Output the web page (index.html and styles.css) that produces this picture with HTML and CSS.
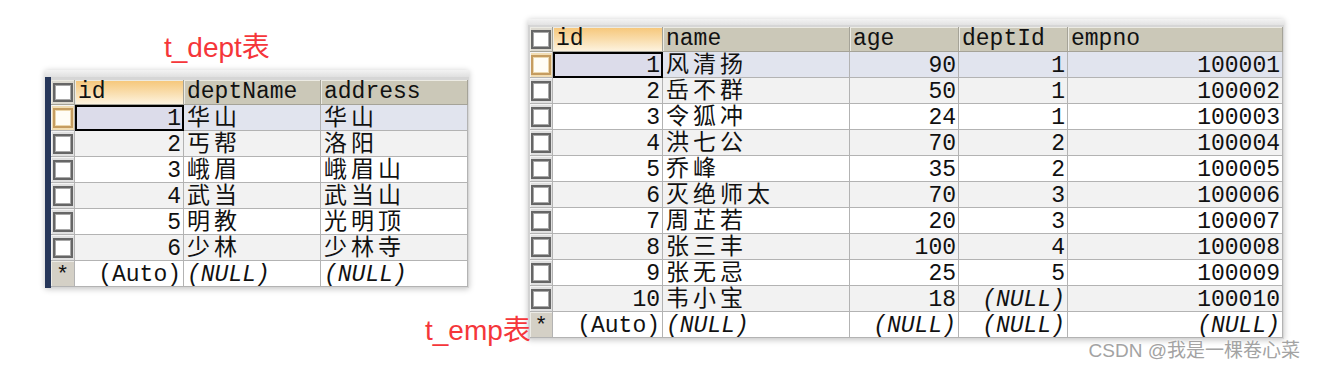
FILE: index.html
```html
<!DOCTYPE html>
<html lang="zh-CN">
<head>
<meta charset="utf-8">
<title>t_dept / t_emp</title>
<link rel="stylesheet" href="styles.css">
</head>
<body>
<div class="page">
  <div class="col col-dept">
    <div class="label">t_dept表</div>
    <div class="win win-dept">
      <div class="navy"></div>
      <div class="frame">
        <div class="grid grid-dept">
          <div class="row head">
            <div class="cell chk"><span class="box"></span></div>
            <div class="cell active">id</div>
            <div class="cell">deptName</div>
            <div class="cell">address</div>
          </div>
          <div class="row sel">
            <div class="cell chk"><span class="box"></span></div>
            <div class="cell num cur">1</div>
            <div class="cell zh">华山</div>
            <div class="cell zh">华山</div>
          </div>
          <div class="row alt">
            <div class="cell chk"><span class="box"></span></div>
            <div class="cell num">2</div>
            <div class="cell zh">丐帮</div>
            <div class="cell zh">洛阳</div>
          </div>
          <div class="row">
            <div class="cell chk"><span class="box"></span></div>
            <div class="cell num">3</div>
            <div class="cell zh">峨眉</div>
            <div class="cell zh">峨眉山</div>
          </div>
          <div class="row alt">
            <div class="cell chk"><span class="box"></span></div>
            <div class="cell num">4</div>
            <div class="cell zh">武当</div>
            <div class="cell zh">武当山</div>
          </div>
          <div class="row">
            <div class="cell chk"><span class="box"></span></div>
            <div class="cell num">5</div>
            <div class="cell zh">明教</div>
            <div class="cell zh">光明顶</div>
          </div>
          <div class="row alt">
            <div class="cell chk"><span class="box"></span></div>
            <div class="cell num">6</div>
            <div class="cell zh">少林</div>
            <div class="cell zh">少林寺</div>
          </div>
          <div class="row">
            <div class="cell chk star">*</div>
            <div class="cell num">(Auto)</div>
            <div class="cell null">(NULL)</div>
            <div class="cell null">(NULL)</div>
          </div>
        </div>
      </div>
    </div>
  </div>

  <div class="col col-emp">
    <div class="win win-emp">
      <div class="frame">
        <div class="grid grid-emp">
          <div class="row head">
            <div class="cell chk"><span class="box"></span></div>
            <div class="cell active">id</div>
            <div class="cell">name</div>
            <div class="cell">age</div>
            <div class="cell">deptId</div>
            <div class="cell">empno</div>
          </div>
          <div class="row sel">
            <div class="cell chk"><span class="box"></span></div>
            <div class="cell num cur">1</div>
            <div class="cell zh">风清扬</div>
            <div class="cell num">90</div>
            <div class="cell num">1</div>
            <div class="cell num">100001</div>
          </div>
          <div class="row alt">
            <div class="cell chk"><span class="box"></span></div>
            <div class="cell num">2</div>
            <div class="cell zh">岳不群</div>
            <div class="cell num">50</div>
            <div class="cell num">1</div>
            <div class="cell num">100002</div>
          </div>
          <div class="row">
            <div class="cell chk"><span class="box"></span></div>
            <div class="cell num">3</div>
            <div class="cell zh">令狐冲</div>
            <div class="cell num">24</div>
            <div class="cell num">1</div>
            <div class="cell num">100003</div>
          </div>
          <div class="row alt">
            <div class="cell chk"><span class="box"></span></div>
            <div class="cell num">4</div>
            <div class="cell zh">洪七公</div>
            <div class="cell num">70</div>
            <div class="cell num">2</div>
            <div class="cell num">100004</div>
          </div>
          <div class="row">
            <div class="cell chk"><span class="box"></span></div>
            <div class="cell num">5</div>
            <div class="cell zh">乔峰</div>
            <div class="cell num">35</div>
            <div class="cell num">2</div>
            <div class="cell num">100005</div>
          </div>
          <div class="row alt">
            <div class="cell chk"><span class="box"></span></div>
            <div class="cell num">6</div>
            <div class="cell zh">灭绝师太</div>
            <div class="cell num">70</div>
            <div class="cell num">3</div>
            <div class="cell num">100006</div>
          </div>
          <div class="row">
            <div class="cell chk"><span class="box"></span></div>
            <div class="cell num">7</div>
            <div class="cell zh">周芷若</div>
            <div class="cell num">20</div>
            <div class="cell num">3</div>
            <div class="cell num">100007</div>
          </div>
          <div class="row alt">
            <div class="cell chk"><span class="box"></span></div>
            <div class="cell num">8</div>
            <div class="cell zh">张三丰</div>
            <div class="cell num">100</div>
            <div class="cell num">4</div>
            <div class="cell num">100008</div>
          </div>
          <div class="row">
            <div class="cell chk"><span class="box"></span></div>
            <div class="cell num">9</div>
            <div class="cell zh">张无忌</div>
            <div class="cell num">25</div>
            <div class="cell num">5</div>
            <div class="cell num">100009</div>
          </div>
          <div class="row alt">
            <div class="cell chk"><span class="box"></span></div>
            <div class="cell num">10</div>
            <div class="cell zh">韦小宝</div>
            <div class="cell num">18</div>
            <div class="cell num null">(NULL)</div>
            <div class="cell num">100010</div>
          </div>
          <div class="row">
            <div class="cell chk star">*</div>
            <div class="cell num">(Auto)</div>
            <div class="cell null">(NULL)</div>
            <div class="cell num null">(NULL)</div>
            <div class="cell num null">(NULL)</div>
            <div class="cell num null">(NULL)</div>
          </div>
        </div>
      </div>
    </div>
    <div class="label label-emp">t_emp表</div>
  </div>

  <div class="watermark">CSDN @我是一棵卷心菜</div>
</div>
</body>
</html>
```

FILE: styles.css
```css
* { box-sizing: border-box; }

html, body {
  margin: 0;
  padding: 0;
  background: #ffffff;
}

.page {
  position: relative;
  width: 1317px;
  height: 370px;
  display: flex;
  align-items: flex-start;
  padding-left: 45px;
  overflow: hidden;
}

.col {
  display: flex;
  flex-direction: column;
}

.col-dept {
  padding-top: 32px;
}

.col-emp {
  position: relative;
  margin-left: 59px;
}

.label {
  font-family: "Liberation Sans", "Noto Sans CJK SC", sans-serif;
  font-size: 28px;
  line-height: 32px;
  color: #f5363a;
  margin-left: 119px;
  white-space: nowrap;
}

.label-emp {
  position: absolute;
  left: -103px;
  top: 315px;
  margin-left: 0;
}

/* window frames */
.win {
  display: flex;
  background: linear-gradient(to bottom, #f3f3f3 0px, #dddddd 8px);
  box-shadow: 0 1px 6px rgba(0, 0, 0, 0.24);
}

.win-dept {
  margin-top: 6px;
  padding-top: 7px;
}

.win-emp {
  margin-top: 19px;
  padding-top: 6px;
}

.navy {
  width: 6px;
  background: #27375a;
}

.frame {
  padding: 3px 1px 1px 0;
  background: #d6d6d6;
}

.win-emp .frame {
  padding-top: 2px;
  border-left: 2px solid #d2d2d2;
}

/* grids */
.grid {
  display: grid;
  font-family: "Liberation Mono", "Noto Sans CJK SC", monospace;
  font-size: 23px;
  color: #111;
  background: #ffffff;
}

.grid-dept {
  grid-template-columns: 24px 109px 137px 147px;
  grid-template-rows: 25px repeat(7, 26px);
}

.grid-emp {
  grid-template-columns: 23px 110px 187px 109px 109px 215px;
  grid-template-rows: 25px repeat(11, 26px);
}

.row {
  display: contents;
}

.cell {
  border-right: 1px solid #b3b3b3;
  border-bottom: 1px solid #b3b3b3;
  padding: 3px 2px 0 3px;
  line-height: 22px;
  white-space: nowrap;
  overflow: hidden;
  background: #ffffff;
}

.row.alt .cell { background: #f2f2f2; }
.row.sel .cell { background: #e1e4ee; }

.cell.num { text-align: right; padding-right: 2px; }
.cell.null { font-style: italic; }

.cell.zh {
  letter-spacing: 4px;
}

.row.sel .cell.cur {
  background: #dcdcea;
  outline: 2px solid #000;
  outline-offset: -2px;
}

/* header */
.row.head .cell {
  padding-top: 1px;
  line-height: 23px;
  background: #cbc8b8;
  border-right-color: #a5a398;
  border-bottom-color: #a5a398;
  box-shadow: inset 1px 1px 0 #ecebe4;
}

.row.head .cell.active {
  background: linear-gradient(to bottom, #f6c678 0%, #f9dcaa 50%, #fdf3df 100%);
}

/* checkbox column */
.cell.chk {
  display: flex;
  align-items: center;
  justify-content: center;
  padding: 0;
  background: #e0e0e0 !important;
  box-shadow: inset 1px 1px 0 #f4f4f4;
}

.row.head .cell.chk {
  background: #dcd9d0 !important;
}

.box {
  width: 20px;
  height: 20px;
  border: 2px solid #666666;
  background: #ffffff;
  box-shadow: inset 0 0 0 1px #a8a8a8;
}

.row.head .box {
  height: 19px;
}

.row.sel .cell.chk {
  background: #f1ddb4 !important;
}

.row.sel .box {
  border-color: #c59c60;
  background: #fffdf6;
  box-shadow: inset 0 0 0 1px #ecd7ad;
}

.cell.star {
  align-items: flex-start;
  padding-top: 2px;
  font-size: 22px;
  line-height: 25px;
  background: #d4d0c6 !important;
  box-shadow: inset 1px 1px 0 #ecebe6;
}

/* watermark */
.watermark {
  position: absolute;
  right: 17px;
  top: 340px;
  font-family: "Liberation Sans", "Noto Sans CJK SC", sans-serif;
  font-size: 19px;
  line-height: 22px;
  color: #a3a3a3;
  text-shadow: 0 0 2px #ffffff, 0 0 2px #ffffff;
  white-space: nowrap;
}
```
